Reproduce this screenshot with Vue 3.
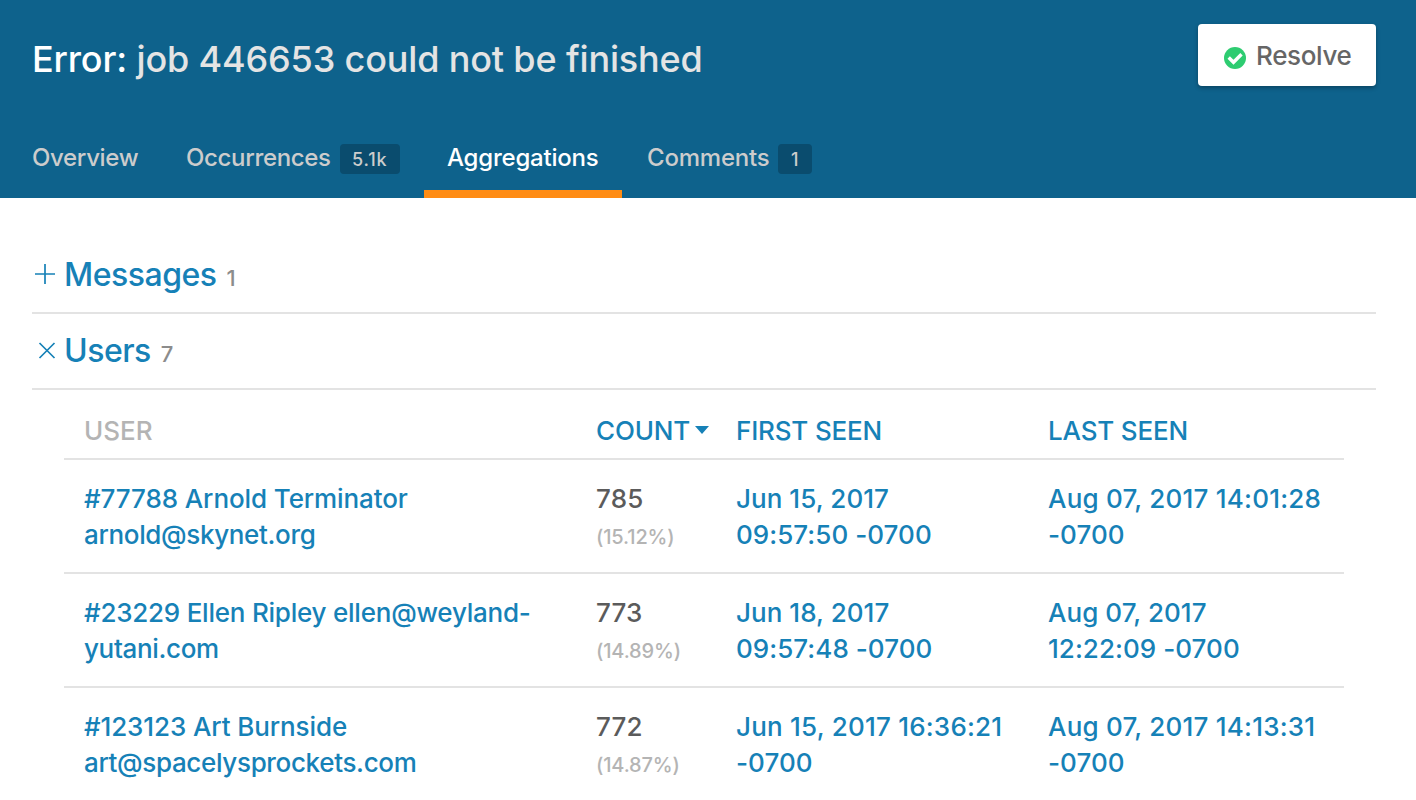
<script setup>
const users = [
  { name: ['#77788 Arnold Terminator', 'arnold@skynet.org'], count: '785', pct: '(15.12%)', first: ['Jun 15, 2017', '09:57:50 -0700'], last: ['Aug 07, 2017 14:01:28', '-0700'] },
  { name: ['#23229 Ellen Ripley ellen@weyland-', 'yutani.com'], count: '773', pct: '(14.89%)', first: ['Jun 18, 2017', '09:57:48 -0700'], last: ['Aug 07, 2017', '12:22:09 -0700'] },
  { name: ['#123123 Art Burnside', 'art@spacelysprockets.com'], count: '772', pct: '(14.87%)', first: ['Jun 15, 2017 16:36:21', '-0700'], last: ['Aug 07, 2017 14:13:31', '-0700'] },
]
</script>

<template>
  <div class="page">
    <header>
      <div class="top">
        <h1><b>Error:</b> <span>job 446653 could not be finished</span></h1>
        <button class="resolve">
          <svg width="22" height="22" viewBox="0 0 22 22"><circle cx="11" cy="11" r="11" fill="#2ecc71" /><path d="M4.7 10.5l4.8 4.8 8-8" fill="none" stroke="#fff" stroke-width="3.4" /></svg>
          <span>Resolve</span>
        </button>
      </div>
      <nav>
        <a class="t1"><span>Overview</span></a>
        <a class="t2"><span>Occurrences</span><i>5.1k</i></a>
        <a class="t3 active"><span>Aggregations</span></a>
        <a class="t4"><span>Comments</span><i>1</i></a>
      </nav>
    </header>
    <main>
      <h2><svg width="32" height="24" viewBox="0 0 32 24"><path d="M3 11h20M13 1v20" /></svg><span>Messages</span><small>1</small></h2>
      <h2><svg width="32" height="24" viewBox="0 0 32 24"><path d="M7.5 4l15 15M22.5 4l-15 15" /></svg><span>Users</span><small>7</small></h2>
      <div class="table">
        <div class="row head">
          <div><span class="muted">USER</span></div>
          <div><span>COUNT</span><svg class="caret" width="14" height="8" viewBox="0 0 14 8"><path d="M0 0h14L7 8z" /></svg></div>
          <div><span>FIRST SEEN</span></div>
          <div><span>LAST SEEN</span></div>
        </div>
        <div v-for="u in users" :key="u.count" class="row">
          <div class="name"><p v-for="l in u.name" :key="l" :class="{ wide: l.length > 30 }"><span>{{ l }}</span></p></div>
          <div><p class="count"><span>{{ u.count }}</span></p><p class="pct"><span>{{ u.pct }}</span></p></div>
          <div class="date"><p v-for="l in u.first" :key="l" :class="{ long: l.length > 15 }"><span>{{ l }}</span></p></div>
          <div class="date"><p v-for="l in u.last" :key="l" :class="{ long: l.length > 15 }"><span>{{ l }}</span></p></div>
        </div>
      </div>
    </main>
  </div>
</template>

<style>
body { margin: 0; overflow: hidden; }
</style>
<style scoped>
.page { width: 1416px; height: 800px; overflow: hidden; background: #fff; font-family: Inter, sans-serif; font-weight: 450; color: #1681b7; }
header { height: 198px; background: #0e628c; box-sizing: border-box; padding: 24px 40px 0 32px; display: flex; flex-direction: column; justify-content: space-between; }
.top { display: flex; justify-content: space-between; align-items: flex-start; }
h1 { margin: 11px 0 0; font-size: 36px; line-height: 48px; font-weight: 450; color: #e4e4e4; white-space: nowrap; letter-spacing: -.15px; }
h1 b { font-weight: 500; color: #fff; }
.resolve { width: 178px; height: 62px; border: 0; border-radius: 4px; background: #fff; box-shadow: 0 2px 4px rgba(0,0,0,.3); color: #666; font: 450 26px/32px Inter, sans-serif; padding: 0 0 0 26px; display: flex; align-items: center; gap: 10px; letter-spacing: -.35px; }
.resolve svg { margin-top: 6px; }
.resolve span { margin-top: 2px; }
nav { display: flex; height: 80px; margin-left: -24px; }
nav a { box-sizing: border-box; height: 80px; padding: 22px 24px 0; display: flex; font-size: 24px; line-height: 36px; color: #ccc; white-space: nowrap; letter-spacing: -.34px; }
nav .active { color: #fff; font-weight: 550; border-bottom: 8px solid #ff8c14; padding-left: 23px; letter-spacing: -.22px; }
.t1 { width: 154px; } .t2 { width: 262px; } .t3 { width: 198px; }
nav .t4 { width: 214px; padding-left: 25px; letter-spacing: -.2px; }
nav i { box-sizing: border-box; font-style: normal; font-size: 18px; line-height: 31px; height: 30px; background: #0a4c6e; border-radius: 4px; padding: 0 12px; margin: 4px 0 0 auto; font-weight: 500; letter-spacing: .8px; }
.t2 i { width: 60px; } .t4 i { width: 34px; padding-left: 13px; }
main { padding: 40px 40px 0 32px; }
h2 { margin: 0; height: 76px; box-sizing: border-box; border-bottom: 2px solid #e3e3e3; display: flex; align-items: center; font-size: 32px; line-height: 40px; font-weight: 450; letter-spacing: -.5px; }
h2 svg { fill: none; stroke: #1681b7; stroke-width: 1.7; }
h2 small { font-size: 22px; font-weight: 450; color: #8c8c8c; margin: 6px 0 0 10px; letter-spacing: 0; }
.table { margin: 0 32px; }
.row { display: grid; grid-template-columns: 512px 140px 312px 316px; height: 114px; box-sizing: border-box; border-bottom: 2px solid #e3e3e3; padding: 21px 0 0 20px; font-size: 26px; line-height: 36px; white-space: nowrap; }
.head { height: 70px; padding-top: 23px; letter-spacing: -.18px; }
.muted { color: #b4b4b4; letter-spacing: 0; }
.caret { margin: 0 0 6px 5px; fill: #1681b7; }
.row:last-child { border: 0; }
p { margin: 0; height: 36px; }
.name p { letter-spacing: -.1px; }
.name .wide { letter-spacing: -.23px; }
.name p:last-child { letter-spacing: -.34px; }
.date { letter-spacing: .05px; }
.long { letter-spacing: .22px; }
.count { color: #5b5b5b; font-weight: 500; letter-spacing: .15px; }
.pct { font-size: 20px; line-height: 40px; color: #b4b4b4; letter-spacing: -.15px; }
</style>
